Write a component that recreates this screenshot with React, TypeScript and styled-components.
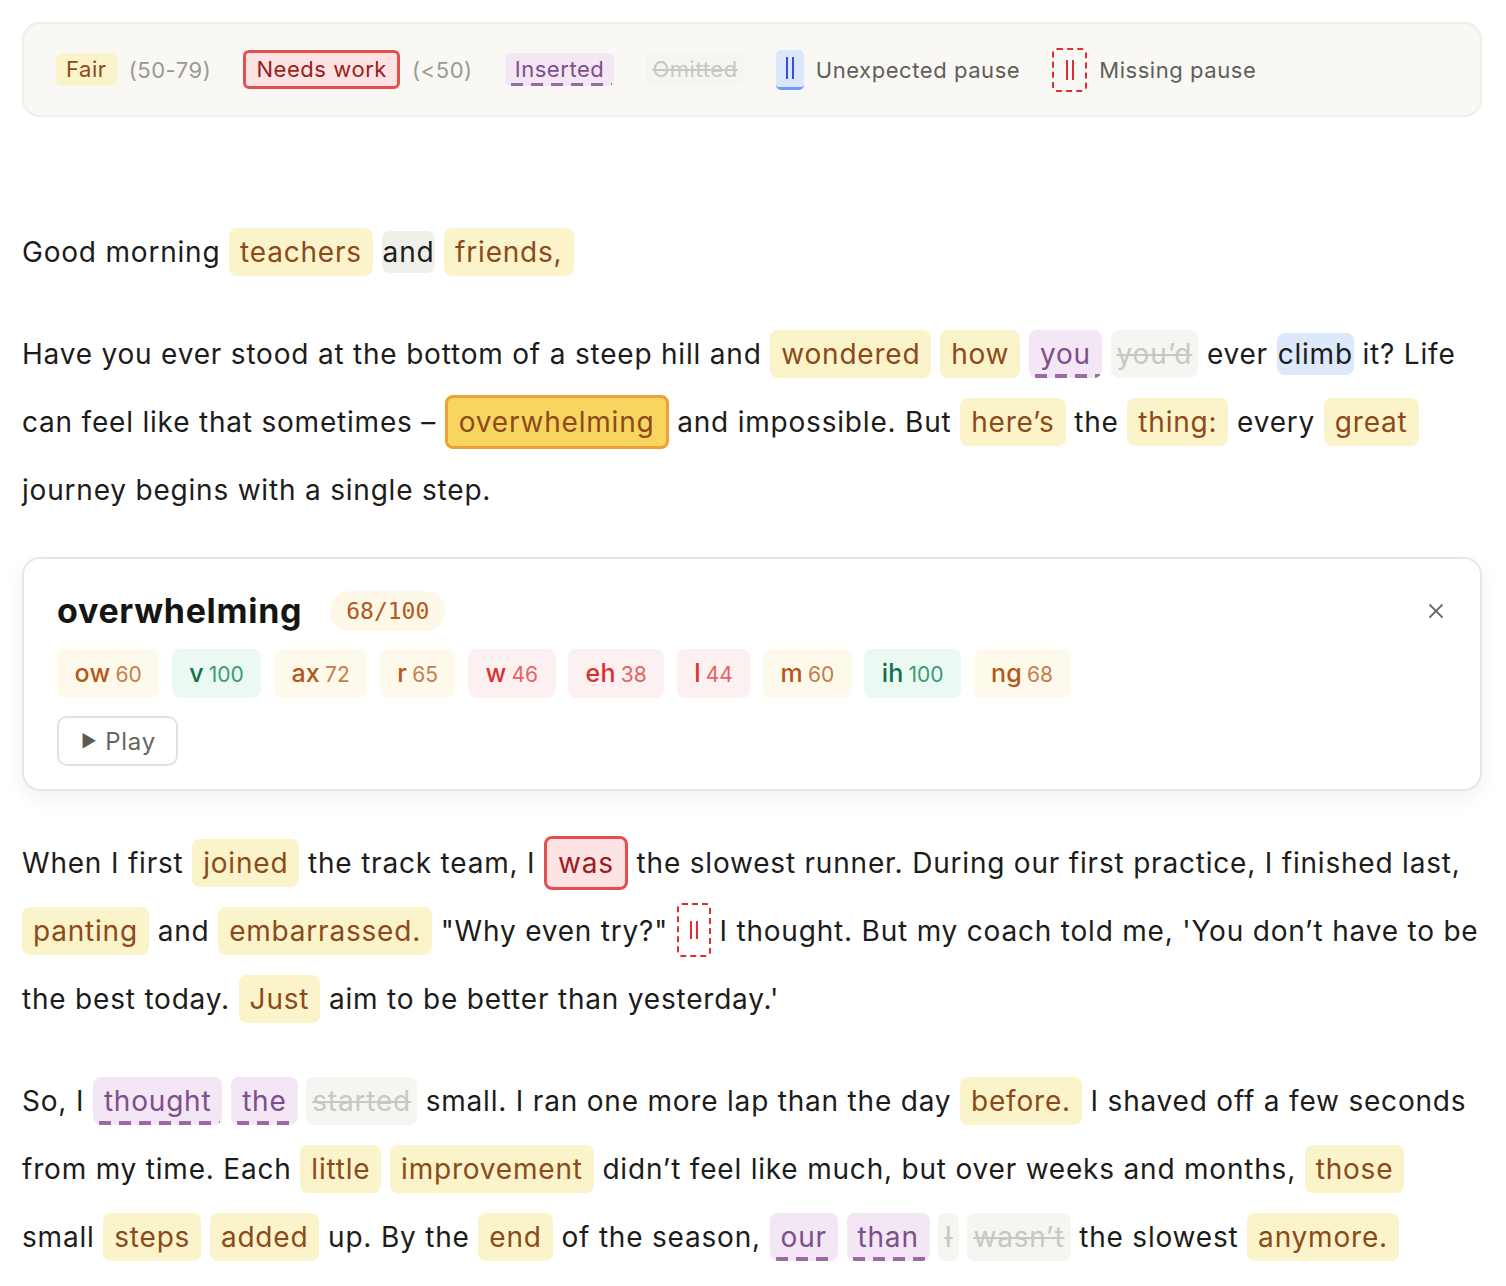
import React from 'react';
import styled, { createGlobalStyle, css } from 'styled-components';
import { X } from 'lucide-react';

const GlobalStyle = createGlobalStyle`
  html, body {
    margin: 0;
    padding: 0;
    background: #ffffff;
  }
  body {
    font-family: Inter, "Noto Sans", sans-serif;
    letter-spacing: 0.56px;
    color: #1c1c1a;
    -webkit-font-smoothing: antialiased;
  }
`;

type Kind = 'fair' | 'poor' | 'inserted' | 'omitted' | 'plain' | 'unexpected' | 'selected';

const dashes = (color: string) => css`
  background-image: repeating-linear-gradient(90deg, ${color} 0 12px, transparent 12px 20px);
  background-position: 6px 100%;
  background-size: calc(100% - 8px) 4px;
  background-repeat: no-repeat;
`;

const kindStyles: Record<Kind, ReturnType<typeof css>> = {
  fair: css`
    background-color: #fbf3c9;
    color: #8c4a1b;
  `,
  poor: css`
    background-color: #fde3e3;
    color: #9b1c1c;
    border: 3px solid #e5504c;
  `,
  inserted: css`
    background-color: #f3e6f5;
    color: #7d4f8c;
    ${dashes('#9b6aa3')}
  `,
  omitted: css`
    background-color: #f5f5f2;
    color: #c8c8c2;
    padding-left: 6px;
    padding-right: 6px;
    text-decoration: line-through;
    text-decoration-thickness: 2px;
  `,
  plain: css`
    background-color: #f0efea;
    padding: 1px 1px;
  `,
  unexpected: css`
    background-color: #dde8fc;
    padding: 1px 1px;
  `,
  selected: css`
    background-color: #f8d55f;
    color: #8c4a1b;
    border: 3px solid #f0a135;
  `,
};

const Page = styled.main`
  padding: 22px 24px 40px 22px;
`;

const Legend = styled.header`
  display: flex;
  align-items: center;
  gap: 32px;
  height: 91px;
  padding: 0 32px;
  background: #f9f8f4;
  border: 2px solid #efeee8;
  border-radius: 18px;
  font-size: 22px;
`;

const LegendGroup = styled.div`
  display: flex;
  align-items: center;
  gap: 12px;
`;

const LegendWord = styled.span<{ $kind: Kind }>`
  display: inline-block;
  line-height: 29px;
  padding: 2px 10px;
  border-radius: 6px;
  ${(p) => kindStyles[p.$kind]}
  ${(p) => p.$kind === 'inserted' && css`
    background-size: calc(100% - 8px) 3px;
  `}
`;

const Note = styled.span`
  color: #9a9a94;
`;

const LegendLabel = styled.span`
  color: #5f5f5a;
`;

const PauseBox = styled.span<{ $missing?: boolean }>`
  display: inline-flex;
  align-items: center;
  justify-content: center;
  box-sizing: border-box;
  border-radius: 5px;
  ${(p) => p.$missing
    ? css`
      width: 35px;
      height: 44px;
      border: 2px dashed #dc2f2f;
      color: #dc2f2f;
    `
    : css`
      width: 28px;
      height: 40px;
      background: #dbe7fd;
      border-bottom: 3px solid #6e9cf5;
      color: #3553d6;
    `}
`;

const Bars = styled.span<{ $h?: number }>`
  display: block;
  width: 4px;
  height: ${(p) => p.$h ?? 20}px;
  border-left: 2px solid currentColor;
  border-right: 2px solid currentColor;
`;

const Transcript = styled.div`
  padding-top: 101px;
`;

const Para = styled.p`
  margin: 0 0 34px;
  font-size: 28px;
  letter-spacing: 0.8px;
  line-height: 68px;
`;

const Word = styled.span<{ $kind: Kind }>`
  display: inline-block;
  line-height: 40px;
  padding: 4px 11px;
  border-radius: 8px;
  ${(p) => kindStyles[p.$kind]}
`;

const InlinePause = styled(PauseBox)`
  width: 34px;
  height: 54px;
  vertical-align: middle;
  margin-top: -6px;
`;

const Card = styled.section`
  margin: -1px 0 38px;
  background: #ffffff;
  border: 2px solid #e8e7df;
  border-radius: 18px;
  padding: 31px 32px 23px 33px;
  box-shadow: 0 8px 20px rgba(40, 40, 20, 0.06);
  display: flex;
  flex-direction: column;
  gap: 18px;
`;

const CardHead = styled.div`
  display: flex;
  align-items: center;
  justify-content: space-between;
`;

const TitleGroup = styled.div`
  display: flex;
  align-items: center;
  gap: 28px;
`;

const Title = styled.h2`
  margin: 0;
  font-size: 34px;
  font-weight: 700;
  letter-spacing: 0.7px;
  color: #151513;
`;

const Score = styled.span`
  display: inline-flex;
  align-items: center;
  height: 40px;
  padding: 0 16px;
  border-radius: 20px;
  background: #fdf8e7;
  color: #b4591c;
  font-family: "DejaVu Sans Mono", "Liberation Mono", monospace;
  font-size: 23px;
  letter-spacing: 0;
`;

const CloseButton = styled.button`
  display: flex;
  align-items: center;
  justify-content: center;
  width: 24px;
  height: 30px;
  padding: 0;
  border: none;
  background: none;
  color: #6b6b66;
`;

const Chips = styled.div`
  display: flex;
  flex-wrap: wrap;
  gap: 12.5px;
`;

type Tone = 'ok' | 'good' | 'bad';

const toneColors: Record<Tone, { bg: string; fg: string; num: string }> = {
  ok: { bg: '#fefaeb', fg: '#b25818', num: '#c87c4a' },
  good: { bg: '#eafaf2', fg: '#11704a', num: '#3a9a72' },
  bad: { bg: '#fdf0f0', fg: '#d83232', num: '#e26464' },
};

const Chip = styled.span<{ $tone: Tone }>`
  display: inline-flex;
  align-items: baseline;
  gap: 5px;
  height: 49px;
  line-height: 49px;
  padding: 0 17.5px;
  border-radius: 8px;
  background: ${(p) => toneColors[p.$tone].bg};
  color: ${(p) => toneColors[p.$tone].fg};
  font-size: 25px;
  font-weight: 500;
  letter-spacing: 0.25px;
`;

const ChipScore = styled.span<{ $tone: Tone }>`
  font-size: 21px;
  font-weight: 400;
  letter-spacing: 0;
  color: ${(p) => toneColors[p.$tone].num};
`;

const PlayButton = styled.button`
  display: inline-flex;
  align-items: center;
  gap: 8px;
  align-self: flex-start;
  height: 50px;
  padding: 0 20px 0 22px;
  border: 2px solid #e4e3d9;
  border-radius: 10px;
  background: #ffffff;
  font-family: inherit;
  font-size: 24px;
  letter-spacing: 0.7px;
  color: #66665f;
`;

const PlayIcon = styled.span`
  font-size: 17px;
  color: #5a5a55;
`;

const phonemes: { sym: string; score: number; tone: Tone }[] = [
  { sym: 'ow', score: 60, tone: 'ok' },
  { sym: 'v', score: 100, tone: 'good' },
  { sym: 'ax', score: 72, tone: 'ok' },
  { sym: 'r', score: 65, tone: 'ok' },
  { sym: 'w', score: 46, tone: 'bad' },
  { sym: 'eh', score: 38, tone: 'bad' },
  { sym: 'l', score: 44, tone: 'bad' },
  { sym: 'm', score: 60, tone: 'ok' },
  { sym: 'ih', score: 100, tone: 'good' },
  { sym: 'ng', score: 68, tone: 'ok' },
];

function WordDetail() {
  return (
    <Card>
      <CardHead>
        <TitleGroup>
          <Title>overwhelming</Title>
          <Score>68/100</Score>
        </TitleGroup>
        <CloseButton aria-label="Close">
          <X size={24} strokeWidth={1.8} />
        </CloseButton>
      </CardHead>
      <Chips>
        {phonemes.map((p) => (
          <Chip key={p.sym} $tone={p.tone}>
            {p.sym}
            <ChipScore $tone={p.tone}>{p.score}</ChipScore>
          </Chip>
        ))}
      </Chips>
      <PlayButton>
        <PlayIcon>▶</PlayIcon>
        Play
      </PlayButton>
    </Card>
  );
}

export default function App() {
  return (
    <>
      <GlobalStyle />
      <Page>
        <Legend>
          <LegendGroup>
            <LegendWord $kind="fair">Fair</LegendWord>
            <Note>(50-79)</Note>
          </LegendGroup>
          <LegendGroup>
            <LegendWord $kind="poor">Needs work</LegendWord>
            <Note>(&lt;50)</Note>
          </LegendGroup>
          <LegendGroup>
            <LegendWord $kind="inserted">Inserted</LegendWord>
          </LegendGroup>
          <LegendGroup>
            <LegendWord $kind="omitted">Omitted</LegendWord>
          </LegendGroup>
          <LegendGroup>
            <PauseBox aria-label="pause">
              <Bars $h={22} />
            </PauseBox>
            <LegendLabel>Unexpected pause</LegendLabel>
          </LegendGroup>
          <LegendGroup>
            <PauseBox $missing aria-label="pause">
              <Bars $h={20} />
            </PauseBox>
            <LegendLabel>Missing pause</LegendLabel>
          </LegendGroup>
        </Legend>

        <Transcript>
          <Para>
            Good morning <Word $kind="fair">teachers</Word> <Word $kind="plain">and</Word>{' '}
            <Word $kind="fair">friends,</Word>
          </Para>

          <Para>
            Have you ever stood at the bottom of a steep hill and <Word $kind="fair">wondered</Word>{' '}
            <Word $kind="fair">how</Word> <Word $kind="inserted">you</Word>{' '}
            <Word $kind="omitted">you’d</Word> ever <Word $kind="unexpected">climb</Word> it? Life
            can feel like that sometimes – <Word $kind="selected">overwhelming</Word> and impossible.
            But <Word $kind="fair">here’s</Word> the <Word $kind="fair">thing:</Word> every{' '}
            <Word $kind="fair">great</Word> journey begins with a single step.
          </Para>

          <WordDetail />

          <Para>
            When I first <Word $kind="fair">joined</Word> the track team, I{' '}
            <Word $kind="poor">was</Word> the slowest runner. During our first practice, I finished
            last, <Word $kind="fair">panting</Word> and <Word $kind="fair">embarrassed.</Word> "Why
            even try?"{' '}
            <InlinePause $missing aria-label="missing pause">
              <Bars $h={18} />
            </InlinePause>{' '}
            I thought. But my coach told me, 'You don’t have to be the best today.{' '}
            <Word $kind="fair">Just</Word> aim to be better than yesterday.'
          </Para>

          <Para>
            So, I <Word $kind="inserted">thought</Word> <Word $kind="inserted">the</Word>{' '}
            <Word $kind="omitted">started</Word> small. I ran one more lap than the day{' '}
            <Word $kind="fair">before.</Word> I shaved off a few seconds from my time. Each{' '}
            <Word $kind="fair">little</Word> <Word $kind="fair">improvement</Word> didn’t feel like
            much, but over weeks and months, <Word $kind="fair">those</Word> small{' '}
            <Word $kind="fair">steps</Word> <Word $kind="fair">added</Word> up. By the{' '}
            <Word $kind="fair">end</Word> of the season, <Word $kind="inserted">our</Word>{' '}
            <Word $kind="inserted">than</Word> <Word $kind="omitted">I</Word>{' '}
            <Word $kind="omitted">wasn’t</Word> the slowest <Word $kind="fair">anymore.</Word>
          </Para>
        </Transcript>
      </Page>
    </>
  );
}
